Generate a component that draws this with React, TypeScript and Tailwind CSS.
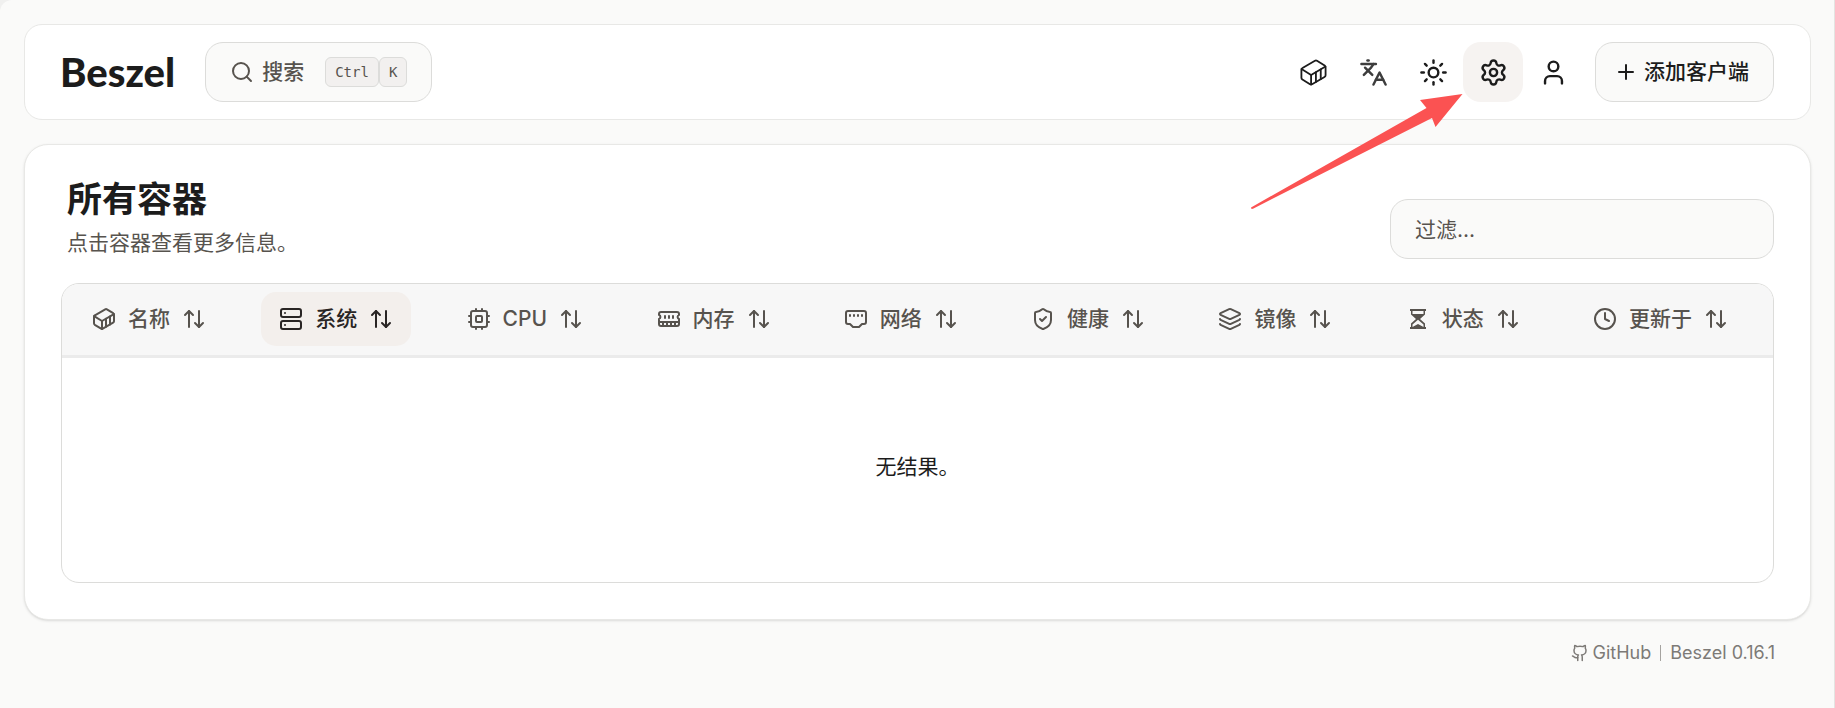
import {
  ArrowUpDown,
  Clock,
  Container,
  Github,
  Languages,
  Layers,
  Plus,
  Search,
  Server,
  Settings,
  ShieldCheck,
  Sun,
  User,
} from "lucide-react"

type IconProps = { className?: string }

const stroke = {
  viewBox: "0 0 24 24",
  fill: "none",
  stroke: "currentColor",
  strokeWidth: 2,
  strokeLinecap: "round",
  strokeLinejoin: "round",
} as const

function CpuIcon({ className }: IconProps) {
  return (
    <svg className={className} {...stroke}>
      <rect width="16" height="16" x="4" y="4" rx="2" />
      <rect width="6" height="6" x="9" y="9" rx="1" />
      <path d="M15 2v2M15 20v2M2 15h2M2 9h2M20 15h2M20 9h2M9 2v2M9 20v2" />
    </svg>
  )
}

function MemoryIcon({ className }: IconProps) {
  return (
    <svg className={className} {...stroke}>
      <path d="M6 19v-3M10 19v-3M14 19v-3M18 19v-3M8 11V9M16 11V9M12 11V9M2 15h20" />
      <path d="M2 7a2 2 0 0 1 2-2h16a2 2 0 0 1 2 2v1.1a2 2 0 0 0 0 3.837V17a2 2 0 0 1-2 2H4a2 2 0 0 1-2-2v-5.1a2 2 0 0 0 0-3.837Z" />
    </svg>
  )
}

function EthernetIcon({ className }: IconProps) {
  return (
    <svg className={className} {...stroke}>
      <path d="m15 20 3-3h2a2 2 0 0 0 2-2V6a2 2 0 0 0-2-2H4a2 2 0 0 0-2 2v9a2 2 0 0 0 2 2h2l3 3z" />
      <path d="M6 8v1M10 8v1M14 8v1M18 8v1" />
    </svg>
  )
}

function HourglassIcon({ className }: IconProps) {
  return (
    <svg className={className} viewBox="0 0 24 24" fill="currentColor" fillRule="evenodd">
      <path d="M4 2h16v2h-1v3.500L14 12l5 4.500V20h1v2H4v-2h1v-3.500L10 12 5 7.500V4H4zM6.500 4v3h11V4zM12 12.800l-5.500 4.700V20l5.500-3 5.500 3v-2.500z" />
    </svg>
  )
}

const columns = [
  { label: "名称", Icon: Container },
  { label: "系统", Icon: Server, active: true },
  { label: "CPU", Icon: CpuIcon },
  { label: "内存", Icon: MemoryIcon },
  { label: "网络", Icon: EthernetIcon },
  { label: "健康", Icon: ShieldCheck },
  { label: "镜像", Icon: Layers },
  { label: "状态", Icon: HourglassIcon },
  { label: "更新于", Icon: Clock },
]

const iconButton = "flex size-15 items-center justify-center rounded-[18px]"

function Navbar() {
  return (
    <header className="flex items-center rounded-[18px] border border-[#e8e8e6] bg-white py-[17px] pr-9 pl-[35px]">
      <a href="#" className="font-['Lato',sans-serif] text-[40px] leading-none font-black text-[#1c1c1c]">
        Beszel
      </a>
      <button className="ml-[30px] flex h-15 items-center rounded-[18px] border border-[#dcdcda] bg-[#fafaf9] px-6 font-medium text-[#57534e]">
        <Search className="mr-2 size-6" />
        搜索
        <span className="ml-[21px] flex font-['DejaVu_Sans_Mono',monospace] text-[14px] font-normal">
          <kbd className="flex h-[30px] items-center rounded-md border border-[#dcdcda] bg-[#f2f0ef] px-[9px] font-[inherit]">Ctrl</kbd>
          <kbd className="flex h-[30px] items-center rounded-md border border-[#dcdcda] bg-[#f2f0ef] px-[9px] font-[inherit]">K</kbd>
        </span>
      </button>

      <nav className="ml-auto flex items-center">
        <a href="#" aria-label="容器" className={iconButton}>
          <Container className="size-[29px]" strokeWidth={1.5} />
        </a>
        <button aria-label="语言" className={iconButton}>
          <Languages className="size-[29px] opacity-85" />
        </button>
        <button aria-label="主题" className={iconButton}>
          <Sun className="size-[29px]" />
        </button>
        <a href="#" aria-label="设置" className="flex size-15 items-center justify-center rounded-[18px] bg-[#f6f3f1]">
          <Settings className="size-[29px]" />
        </a>
        <button aria-label="用户" className={iconButton}>
          <User className="size-[29px]" />
        </button>
        <button className="ml-3 flex h-15 items-center gap-1.5 rounded-[18px] border border-[#dcdcda] bg-[#fafaf9] pr-6 pl-[18px] font-medium">
          <Plus className="size-6" />
          添加客户端
        </button>
      </nav>
    </header>
  )
}

function ContainersTable() {
  return (
    <div className="overflow-hidden rounded-[18px] border border-[#dcdcda]">
      <table className="w-full">
        <thead className="border-b-3 border-[#ebebeb] bg-[#f7f7f7]">
          <tr>
            {columns.map(({ label, Icon, active }) => (
              <th key={label} className="h-18 px-3 text-left font-medium">
                <button
                  className={
                    active
                      ? "flex h-[54px] items-center gap-3 rounded-[15px] bg-[#f3efec] px-[18px] whitespace-nowrap text-[#292524]"
                      : "flex h-[54px] items-center gap-3 rounded-[15px] px-[18px] whitespace-nowrap text-[#57534e]"
                  }
                >
                  <Icon className="size-6" />
                  {label}
                  <ArrowUpDown className="size-6" />
                </button>
              </th>
            ))}
          </tr>
        </thead>
        <tbody>
          <tr>
            <td colSpan={columns.length} className="h-[226px] pb-1.5 text-center">
              无结果。
            </td>
          </tr>
        </tbody>
      </table>
    </div>
  )
}

export default function App() {
  return (
    <div className="bg-[#f0f0ef]">
      <div className="relative min-h-screen rounded-tl-xl border-r border-[#e4e4e2] bg-[#fafaf9] pt-6 pr-[23px] pl-6 font-['Inter','Noto_Sans_CJK_SC',sans-serif] text-[21px] leading-[30px] text-[#1c1c1c]">
        <Navbar />

        <main className="mt-6 rounded-3xl border border-[#e8e8e6] bg-white p-9 shadow-sm">
          <div className="mb-6 flex items-end justify-between">
            <div className="pb-px pl-1.5">
              <h1 className="text-[35px] leading-9 font-bold">所有容器</h1>
              <p className="mt-[11px] text-[#57534e]">点击容器查看更多信息。</p>
            </div>
            <input
              aria-label="过滤"
              placeholder="过滤..."
              className="h-15 w-96 rounded-[18px] border border-[#dcdcda] bg-[#fafaf9] px-6 placeholder:text-[#57534e]"
            />
          </div>
          <ContainersTable />
        </main>

        <footer className="mt-[19px] flex items-center justify-end pr-9 text-[18px] leading-7 text-[#7d7a77]">
          <a href="#" className="flex items-center gap-1">
            <Github className="size-[18px]" />
            GitHub
          </a>
          <span className="mx-[9px] h-4 w-px bg-[#a5a3a0]" />
          <a href="#">Beszel 0.16.1</a>
        </footer>

        {/* pointer to the settings button */}
        <svg className="pointer-events-none absolute top-[92px] right-[370px] h-[120px] w-[214px]" viewBox="0 0 214 120" fill="#fb5252">
          <path d="M212.500 2 170 8l6.500 8L1 115.500l.5 1.500 1.500-.3L182 26l3.500 9z" />
        </svg>
      </div>
    </div>
  )
}
